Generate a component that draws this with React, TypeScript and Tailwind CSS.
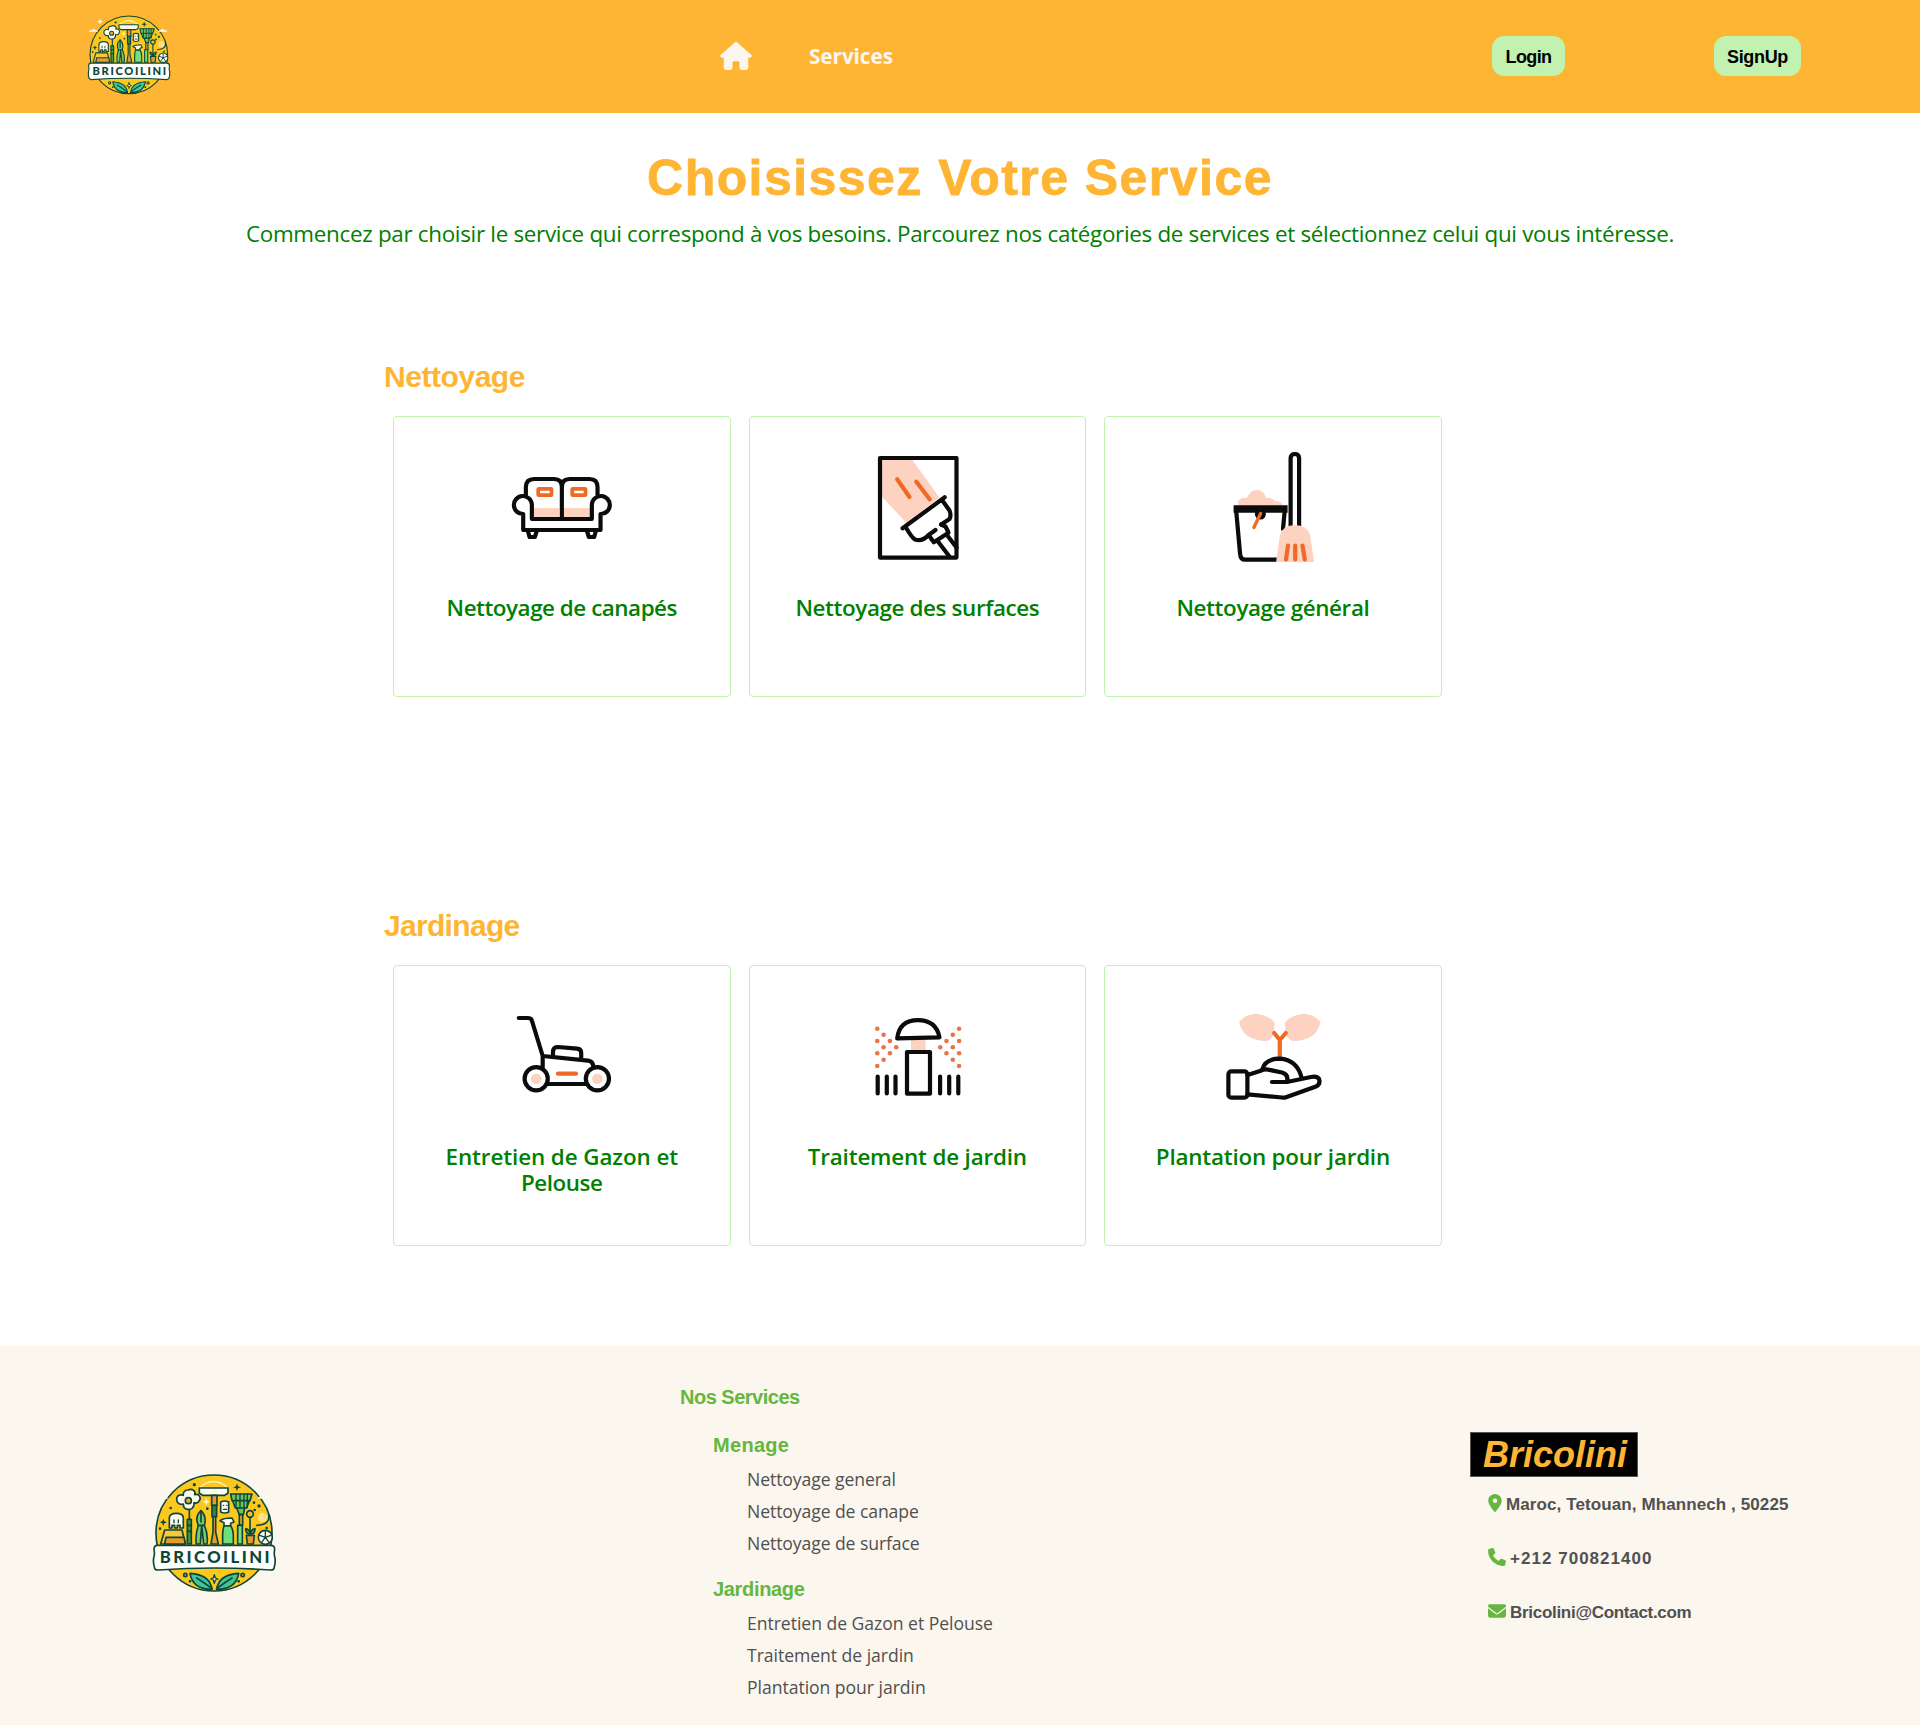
import type { ReactNode } from "react";
import { FaEnvelope, FaHouse, FaLocationDot, FaPhone } from "react-icons/fa6";

const INK = "#0b0b0b";
const PEACH = "#fdd2c0";
const ORANGE = "#ee6a26";
const HEAD = "font-['Liberation_Sans',sans-serif] font-bold";

function Logo({ className }: { className: string }) {
  const d = "#0d4638";
  return (
    <svg viewBox="0 0 450 435" className={className} fill="none" stroke={d} strokeWidth="5" strokeLinecap="round" strokeLinejoin="round">
      <circle cx="222" cy="219" r="174" fill="#fcc81f" />
      <g stroke="none" fill="#fdf8ea">
        <path d="M93 56l4 10 10 4-10 4-4 10-4-10-10-4 10-4z" />
        <path d="M42 116q6-10 14-8 8-10 16 0 10 0 12 8zM352 116q6-10 14-8 8-10 16 0 10 0 14 8z" />
        <circle cx="368" cy="172" r="14" fill="#fde08a" />
      </g>
      <path d="M180 82q40-34 82 0" stroke="#fdeeb5" />
      <path d="M142 178h12v74h-12z" fill="#3f9b4a" />
      <path d="M148 148V178M142 196h12M142 214h12" />
      <g fill="#fffaf0">
        <path d="M144 90c14-6 24 4 20 14 14-4 20 10 14 18-4 8-12 8-16 6 2 14-8 22-18 20-10 0-14-8-14-16-12 4-20-4-20-14 0-12 12-16 20-12-2-8 4-16 14-16z" />
        <circle cx="145" cy="122" r="9" fill="#eeb422" />
        <path d="M88 204v-30q0-14 21-14t21 14v30h-10v-8h-8v8h-8v-8h-8v8z" />
        <path d="M178 84h86v16l-10 6h-66l-10-6z" />
        <path d="M242 126q12-6 24 0v30q-12 6-24 0z" />
        <path d="M240 182q10-8 36-8l6 12-10 4v8h-20v-10z" />
        <circle cx="376" cy="232" r="21" />
      </g>
      <path d="M102 180v8M115 180v8M250 136h1M260 136h1M250 148h10" strokeWidth="4" />
      <path d="M376 232v-18M376 232l17-6M376 232l11 15M376 232l-11 15M376 232l-17-6" strokeWidth="4" />
      <path d="M215 106h16v30h-4v80l8 36h-22l6-36v-80h-4z" fill="#e79a2e" />
      <path d="M216 136h14v34h-14z" fill="#39844b" />
      <path d="M74 210h52l10 42H62z" fill="#f7c93a" />
      <path d="M78 232h54l4 20H74z" fill="#e99a2c" />
      <path d="M183 152q-20 18-8 44-10 30-6 56h12l4-56 6 56h10q4-30-8-56 8-26-10-44z" fill="#7bc96f" />
      <path d="M183 152v34M175 196h18" />
      <path d="M252 198h20q8 10 8 30v24h-32v-24q0-20 4-30z" fill="#6fe07a" />
      <path d="M272 102h64l-6 20h-54zM278 122h50l-8 22h-34zM290 144h24l-4 20h-12z" fill="#71c45d" />
      <path d="M288 102v40M300 102v42M312 102v42M322 102v40" strokeWidth="4" />
      <path d="M298 164h10v32h-10z" fill="#e7a531" />
      <path d="M293 196h14v56h-14z" fill="#7be07d" />
      <circle cx="330" cy="162" r="10" fill="#f0bd2e" />
      <path d="M330 172v54" />
      <path d="M331 222q-14 0-14-16 12 2 14 16zM331 222q14 0 14-16-12 2-14 16z" fill="#35b27c" />
      <path d="M319 226h24l-3 26h-18z" fill="#e99a2c" />
      <path d="M386 164q6 30-36 32" />
      <g fill={d} stroke="none">
        <path d="M291 70l3 9 9 3-9 3-3 9-3-9-9-3 9-3zM70 176l3 8 8 3-8 3-3 8-3-8-8-3 8-3z" />
        <path d="M199 114l3 8 8 3-8 3-3 8-3-8-8-3 8-3z" fill="#fff8df" />
        <circle cx="163" cy="74" r="5" />
        <circle cx="92" cy="144" r="4" />
        <circle cx="357" cy="138" r="5" />
        <circle cx="342" cy="128" r="4" />
        <circle cx="344" cy="150" r="4" />
        <circle cx="202" cy="146" r="4" />
        <circle cx="380" cy="204" r="4" />
        <circle cx="60" cy="206" r="4" />
        <circle cx="296" cy="364" r="4" />
        <circle cx="150" cy="364" r="4" />
      </g>
      <circle cx="136" cy="345" r="5" />
      <circle cx="308" cy="345" r="5" />
      <path d="M223 344l3 10 8 3-8 3-3 10-3-10-8-3 8-3z" fill="#fff8df" strokeWidth="4" />
      <path d="M216 388q-6-44-66-48 8 48 66 48zM230 388q6-44 66-48-8 48-66 48z" fill="#3fc79a" />
      <path d="M216 386q-26-20-46-32M230 386q26-20 46-32" />
      <path
        d="M54 256H392q12 0 12 12-3 14 1 26 2 16-2 26 0 10-12 10-170-12-336 0-12 0-12-10-4-12-2-26 4-12 1-26 0-12 10-12z"
        fill="#fff"
      />
      <text x="59" y="309" textLength="330" lengthAdjust="spacing" stroke="none" fill={d} className="font-['Lato'] text-[50px] font-black">
        BRICOILINI
      </text>
    </svg>
  );
}

function Art({ children }: { children: ReactNode }) {
  return (
    <svg
      viewBox="0 0 120 120"
      className="size-[120px] shrink-0"
      fill="none"
      stroke={INK}
      strokeWidth="4.2"
      strokeLinecap="round"
      strokeLinejoin="round"
    >
      {children}
    </svg>
  );
}

function Sofa() {
  return (
    <Art>
      <g transform="translate(-121.8 -47) scale(.33333)" strokeWidth="12.5">
        <path d="M460 324h77v30h-77zM551 324h79v30h-79z" fill={PEACH} stroke="none" />
        <path d="M437 285V262Q437 237 462 237H522Q545 237 545 262V355M652 285V262Q652 237 628 237H568Q545 237 545 262" />
        <path d="M429 342A27 27 0 1 1 455 313V357H635V313A27 27 0 1 1 661 342V390H429Z" />
        <path d="M443 392L448 411H464L470 392M620 392L626 411H642L647 392" />
        <g stroke={ORANGE} strokeWidth="11" fill="#fff">
          <rect x="474" y="266.500" width="40" height="19" rx="2" />
          <rect x="576" y="266.500" width="40" height="19" rx="2" />
        </g>
      </g>
    </Art>
  );
}

function Squeegee() {
  return (
    <Art>
      <path d="M25 13H55.5L82.3 50.5L49.4 76L25 49.7z" fill={PEACH} stroke="none" />
      <path d="M40.2 32.3L52.5 50M59.3 34.7L72.7 52.3" stroke={ORANGE} />
      <path d="M23 11H99.5V110.6H23z" />
      <path d="M45.6 81.3L87.7 50.3M48.6 80Q55 91 58 92.5Q65 95 71.6 88L78.5 83M85 53L92.5 63.5Q94.5 68 92.5 72L84.2 77.5" />
      <path d="M71.6 88L76.8 95.3L91.5 85.7L88.5 79.5L84.2 77.5M80.6 94L92.6 109.7M90 88L99.5 100.5" />
    </Art>
  );
}

function Bucket() {
  return (
    <Art>
      <path d="M25 59V55Q27 50 34 51Q37 43 44 43Q51 43 53 51Q59 50 62 54Q69 54 70 59z" fill={PEACH} stroke="none" />
      <path d="M77.6 80V11Q78 7 81.9 7Q85.8 7 86.1 11V80" />
      <path d="M20.6 58.3h54v7.5h-54z" fill={INK} stroke="none" />
      <circle cx="47.4" cy="67" r="5.5" fill={INK} stroke="none" />
      <path d="M23.3 65L27.1 107Q27.6 112.7 32 112.7H64M71.6 65L70 82" />
      <path d="M47.6 66.5L40.9 80.5" stroke={ORANGE} strokeWidth="3.4" />
      <path d="M63.1 115L67 88Q70 78 82 78Q94 78 97 88L101 115z" fill={PEACH} stroke="none" />
      <path d="M75 98.5L73 112.5M82.2 98.5V112.5M89.5 98.5L91.8 112.5" stroke={ORANGE} />
    </Art>
  );
}

function Mower() {
  return (
    <Art>
      <path d="M16.8 22H26Q29.3 22 30 25L40.7 60V71M51 60V55Q51.5 51 56 51L75 52.7Q79.2 53 79.2 57V62M40.7 60L86 64.6Q90.5 65 91.3 70M46 88H84" />
      <circle cx="34.2" cy="82.7" r="11.6" />
      <circle cx="95.4" cy="82.7" r="11.6" />
      <g fill={PEACH} stroke="none">
        <circle cx="34.2" cy="82.7" r="5.3" />
        <circle cx="95.4" cy="82.7" r="5.3" />
      </g>
      <path d="M56 77.7H74" stroke={ORANGE} />
    </Art>
  );
}

const DROPS = [
  [20.3, 32.7],
  [20.3, 45],
  [20.3, 57.3],
  [20.3, 70],
  [26.6, 38.7],
  [26.6, 51.3],
  [26.6, 63.7],
  [32.9, 45],
  [32.9, 57.3],
  [39.2, 51.3],
];

function Sprinkler() {
  return (
    <Art>
      <path d="M54 43h14.5v12H54z" fill={PEACH} stroke="none" />
      <path d="M40.2 42.3L82.5 41.3Q79 24.2 61 24.2Q42.5 24.2 40.2 42.3z" />
      <path d="M50 56H73V97.7H50z" />
      <path d="M20.7 80.5V97.5M29.8 80.5V97.5M38.5 80.5V97.5M83.1 80.5V97.5M92.2 80.5V97.5M101.3 80.5V97.5" />
      <g fill="#ea7447" stroke="none">
        {DROPS.map(([x, y]) => (
          <g key={`${x}-${y}`}>
            <circle cx={x} cy={y} r="2.3" />
            <circle cx={122.4 - x} cy={y} r="2.3" />
          </g>
        ))}
      </g>
    </Art>
  );
}

function Seedling() {
  return (
    <Art>
      <g fill={PEACH} stroke="none">
        <path d="M26 25.7Q33 18 43 18Q56 19 62 27L60.5 38Q58 44 54 45Q30 45 26 25.7Z" />
        <path d="M107.6 25.7Q100.6 18 90.6 18Q77.6 19 71.6 27L73.1 38Q75.6 44 79.6 45Q103.6 45 107.6 25.7Z" />
      </g>
      <path d="M66.8 61V44M61.2 37L66.8 44L72.8 37" stroke={ORANGE} />
      <path d="M49.4 73.5Q52 62.7 66.8 62.7Q84 64 88.5 81.3" />
      <rect x="15.4" y="75.3" width="19" height="26.4" rx="3" />
      <path d="M34.4 79L47 75Q51 73 55 73.6L69 76.5Q76 78.5 73.9 86H59M73.9 86L98 81Q106 79.5 106.5 85Q106.7 89 103 90.5L73 101.3Q71 102 69 101.5L34.4 98.3" />
    </Art>
  );
}

function Card({ art, label, tracking }: { art: ReactNode; label: ReactNode; tracking: string }) {
  return (
    <div className="mx-[9px] flex h-[281px] flex-1 flex-col items-center rounded-[4px] border border-[#c1f2b0] pt-[30px]">
      {art}
      <p className={"mt-[28px] text-center text-[22.4px] leading-[26px] font-semibold whitespace-nowrap text-[#008000] " + tracking}>
        {label}
      </p>
    </div>
  );
}

function Category({ title, tracking, className, children }: { title: string; tracking: string; className: string; children: ReactNode }) {
  return (
    <section className={"ml-[384px] w-[1066.7px] " + className}>
      <h2 className={`text-[30px] leading-[36px] text-[#ffb534] ${tracking} ${HEAD}`}>{title}</h2>
      <div className="mt-[21px] flex">{children}</div>
    </section>
  );
}

export default function App() {
  return (
    <div className="min-h-[1725px] bg-white font-['Open_Sans',sans-serif] whitespace-nowrap">
      <header className="flex h-[113px] items-start bg-[#ffb534]">
        <Logo className="mt-[6px] ml-[79px] h-[97px] w-[101px]" />
        <FaHouse className="mt-[42px] ml-[540px] h-[28px] w-[32px] text-[#fbf6ee]" />
        <a className="mt-[43px] ml-[57px] w-[84px] text-[20.8px] leading-[27px] font-bold tracking-[-0.1px] text-[#fbf6ee]">Services</a>
        <button className={"mt-[36px] ml-[599px] h-[40px] w-[73px] rounded-xl bg-[#c1f2b0] pt-[2px] text-[18px] tracking-[-0.6px] text-black " + HEAD}>
          Login
        </button>
        <button className={"mt-[36px] ml-[149px] h-[40px] w-[87px] rounded-xl bg-[#c1f2b0] pt-[2px] text-[18px] tracking-[-0.33px] text-black " + HEAD}>
          SignUp
        </button>
      </header>

      <main>
        <h1 className={"mt-[35px] text-center text-[50px] leading-[60px] tracking-[1.45px] text-[#ffb534] [-webkit-text-stroke:0.8px_#ffb534] " + HEAD}>
          Choisissez Votre Service
        </h1>
        <p className="mt-[11px] text-center text-[22.4px] leading-[30px] tracking-[-0.3px] text-[#008000]">
          Commencez par choisir le service qui correspond à vos besoins. Parcourez nos catégories de services et sélectionnez celui qui vous intéresse.
        </p>
        <Category title="Nettoyage" tracking="tracking-[-0.45px]" className="mt-[110px]">
          <Card art={<Sofa />} label="Nettoyage de canapés" tracking="tracking-[-0.46px]" />
          <Card art={<Squeegee />} label="Nettoyage des surfaces" tracking="tracking-[-0.38px]" />
          <Card art={<Bucket />} label="Nettoyage général" tracking="tracking-[-0.37px]" />
        </Category>
        <Category title="Jardinage" tracking="tracking-[-0.69px]" className="mt-[211px]">
          <Card
            art={<Mower />}
            label={
              <>
                Entretien de Gazon et
                <br />
                <span className="tracking-[-0.44px]">Pelouse</span>
              </>
            }
            tracking="tracking-[-0.08px]"
          />
          <Card art={<Sprinkler />} label="Traitement de jardin" tracking="tracking-[-0.17px]" />
          <Card art={<Seedling />} label="Plantation pour jardin" tracking="tracking-[-0.2px]" />
        </Category>
      </main>

      <footer className="mt-[100px] flex h-[379px] items-start bg-[#fbf6ee] text-[#505050]">
        <Logo className="mt-[114px] ml-[140px] h-[145px] w-[150px]" />
        <div className="mt-[39px] ml-[390px] w-[320px]">
          <h3 className={"text-[20px] leading-[24px] tracking-[-0.5px] text-[#65b741] " + HEAD}>Nos Services</h3>
          <div className="mt-[24px] ml-[33px]">
            <h4 className={"text-[20px] leading-[24px] tracking-[0.3px] text-[#65b741] " + HEAD}>Menage</h4>
            <ul className="mt-[6px] ml-[34px] text-[17.6px] leading-[32px] tracking-[-0.09px]">
              <li>Nettoyage general</li>
              <li>Nettoyage de canape</li>
              <li>Nettoyage de surface</li>
            </ul>
            <h4 className={"mt-[18px] text-[20px] leading-[24px] tracking-[-0.33px] text-[#65b741] " + HEAD}>Jardinage</h4>
            <ul className="mt-[6px] ml-[34px] text-[17.6px] leading-[32px] tracking-[-0.04px]">
              <li>Entretien de Gazon et Pelouse</li>
              <li>Traitement de jardin</li>
              <li>Plantation pour jardin</li>
            </ul>
          </div>
        </div>
        <div className={"mt-[86px] ml-[470px] text-[17px] leading-[24px] " + HEAD}>
          <div className="h-[45px] w-[168px] border border-[#555] bg-black pl-[12px] text-[36px] leading-[44px] text-[#ffb534] italic">
            Bricolini
          </div>
          <div className="mt-[15px] ml-[18px] flex h-[54px]">
            <FaLocationDot className="mt-[2px] mr-[4px] h-[18px] w-[14px] text-[#65b741]" />
            <span className="mt-px tracking-[0.1px]">Maroc, Tetouan, Mhannech , 50225</span>
          </div>
          <div className="ml-[18px] flex h-[54px]">
            <FaPhone className="mt-[2px] mr-[4px] size-[18px] text-[#65b741]" />
            <span className="mt-px tracking-[1.03px]">+212 700821400</span>
          </div>
          <div className="ml-[18px] flex h-[54px]">
            <FaEnvelope className="mt-[2px] mr-[4px] size-[18px] text-[#65b741]" />
            <span className="mt-px tracking-[-0.29px]">Bricolini@Contact.com</span>
          </div>
        </div>
      </footer>
    </div>
  );
}
